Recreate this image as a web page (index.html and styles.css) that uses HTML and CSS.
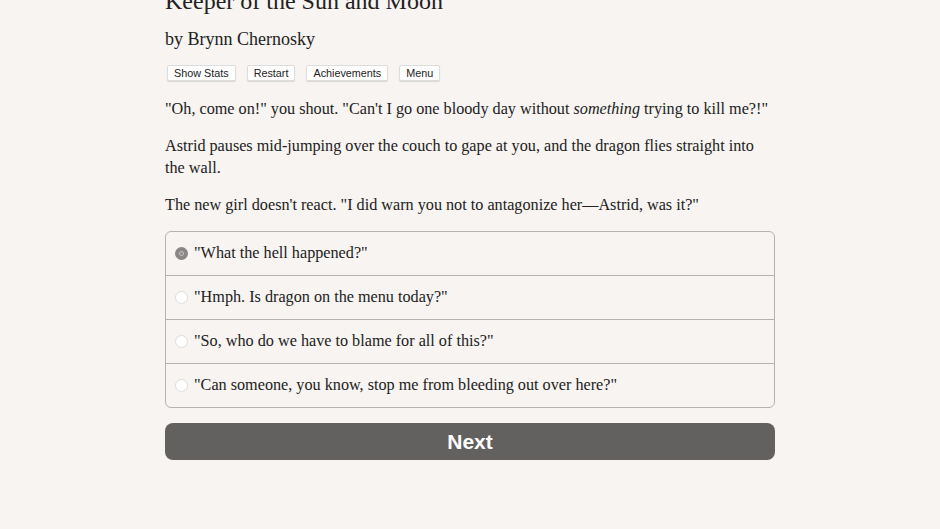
FILE: index.html
```html
<!DOCTYPE html>
<html lang="en">
<head>
    <meta charset="UTF-8">
    <title>Keeper of the Sun and Moon</title>
    <link rel="stylesheet" href="styles.css">
</head>
<body>
<div class="container">
    <div class="header">
        <h1 class="gameTitle">Keeper of the Sun and Moon</h1>
        <h2 class="author">by Brynn Chernosky</h2>
        <div class="buttons">
            <button class="spacedLink">Show Stats</button>
            <button class="spacedLink">Restart</button>
            <button class="spacedLink">Achievements</button>
            <button class="spacedLink">Menu</button>
        </div>
    </div>
    <div id="text">
        <p>"Oh, come on!" you shout. "Can't I go one bloody day without <i>something</i> trying to kill me?!"</p>
        <p>Astrid pauses mid-jumping over the couch to gape at you, and the dragon flies straight into the wall.</p>
        <p>The new girl doesn't react. "I did warn you not to antagonize her—Astrid, was it?"</p>
    </div>
    <form class="choiceForm">
        <div class="choice">
            <label class="choiceRow"><span class="radio checked"></span>"What the hell happened?"</label>
            <label class="choiceRow"><span class="radio"></span>"Hmph. Is dragon on the menu today?"</label>
            <label class="choiceRow"><span class="radio"></span>"So, who do we have to blame for all of this?"</label>
            <label class="choiceRow"><span class="radio"></span>"Can someone, you know, stop me from bleeding out over here?"</label>
        </div>
        <button type="button" class="next">Next</button>
    </form>
</div>
</body>
</html>
```

FILE: styles.css
```css
body {
    margin: 0;
    background-color: #f7f4f1;
    color: #222;
    font-family: "Liberation Serif", serif;
    font-size: 16.2px;
}

.container {
    width: 610px;
    margin: -14px auto 0 165px;
}

.gameTitle {
    font-size: 24px;
    font-weight: normal;
    line-height: 30px;
    margin: 0;
}

.author {
    font-size: 18px;
    font-weight: normal;
    line-height: 24px;
    margin: 11px 0 0 0;
}

.buttons {
    display: flex;
    gap: 11px;
    margin: 14px 0 0 2px;
}

.spacedLink {
    font-family: "Liberation Sans", sans-serif;
    font-size: 10.8px;
    color: #222;
    background: #fff;
    border: 1px solid #ddd;
    border-radius: 2px;
    box-shadow: 0 1px 1px rgba(0, 0, 0, 0.12);
    padding: 1px 6px;
    height: 16px;
}

#text p {
    line-height: 22px;
    margin: 15px 0;
}

#text p:first-child {
    margin-top: 17px;
}

.choice {
    border: 1px solid #b5b2b0;
    border-radius: 6px;
    margin-top: 15px;
}

.choiceRow {
    display: flex;
    align-items: center;
    height: 43px;
    padding-left: 9px;
    border-top: 1px solid #b5b2b0;
}

.choiceRow:first-child {
    border-top: none;
}

.radio {
    width: 13px;
    height: 13px;
    border-radius: 50%;
    background: #fff;
    border: 1px solid #ddd;
    box-sizing: border-box;
    margin-right: 6px;
}

.radio.checked {
    background: #8a8887;
    border: 4px solid #8a8887;
    box-shadow: inset 0 0 0 1px #c9c7c6;
}

.next {
    display: block;
    width: 100%;
    height: 37px;
    margin-top: 15px;
    background: #636160;
    color: #fff;
    border: none;
    border-radius: 8px;
    font-family: "Liberation Sans", sans-serif;
    font-weight: bold;
    font-size: 21px;
}
```
